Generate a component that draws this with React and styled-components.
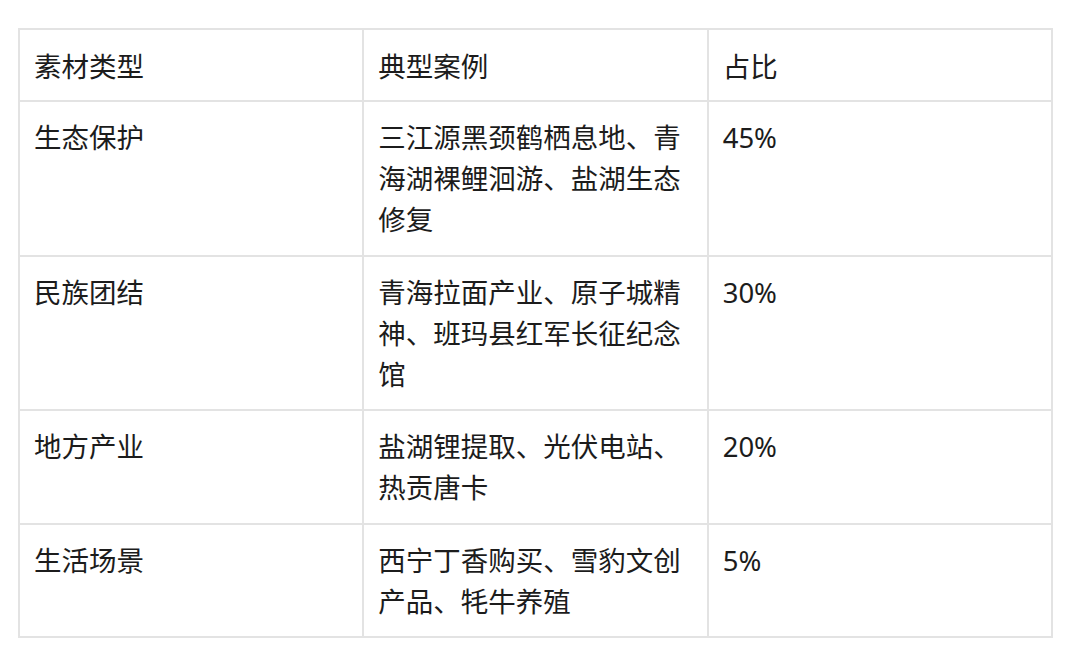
import styled, { createGlobalStyle } from "styled-components";

const GlobalStyle = createGlobalStyle`
  html, body {
    margin: 0;
    background: #ffffff;
  }
`;

const Page = styled.div`
  padding: 28px 0 0 18px;
  font-family: "Noto Sans", "Noto Sans CJK SC", sans-serif;
  color: #1c1c1c;
`;

const Table = styled.table`
  width: 1035px;
  border-collapse: separate;
  border-spacing: 0;
  table-layout: fixed;
  border-top: 2px solid #e3e3e3;
  border-left: 2px solid #e3e3e3;
`;

const Cell = styled.td`
  border-right: 2px solid #e3e3e3;
  border-bottom: 2px solid #e3e3e3;
  padding: ${(p) => (p.$head ? "16px 15px 13px 14px" : "15px 15px 14.5px 14px")};
  vertical-align: top;
  font-size: 27.5px;
  line-height: 41px;
  font-weight: 400;
  text-align: left;
  word-break: break-all;
`;

const rows = [
  ["生态保护", "三江源黑颈鹤栖息地、青海湖裸鲤洄游、盐湖生态修复", "45%"],
  ["民族团结", "青海拉面产业、原子城精神、班玛县红军长征纪念馆", "30%"],
  ["地方产业", "盐湖锂提取、光伏电站、热贡唐卡", "20%"],
  ["生活场景", "西宁丁香购买、雪豹文创产品、牦牛养殖", "5%"],
];

export default function App() {
  return (
    <Page>
      <GlobalStyle />
      <Table>
        <thead>
          <tr>
            <Cell as="th" $head>素材类型</Cell>
            <Cell as="th" $head>典型案例</Cell>
            <Cell as="th" $head>占比</Cell>
          </tr>
        </thead>
        <tbody>
          {rows.map((r) => (
            <tr key={r[0]}>
              {r.map((c, i) => (
                <Cell key={i}>{c}</Cell>
              ))}
            </tr>
          ))}
        </tbody>
      </Table>
    </Page>
  );
}
